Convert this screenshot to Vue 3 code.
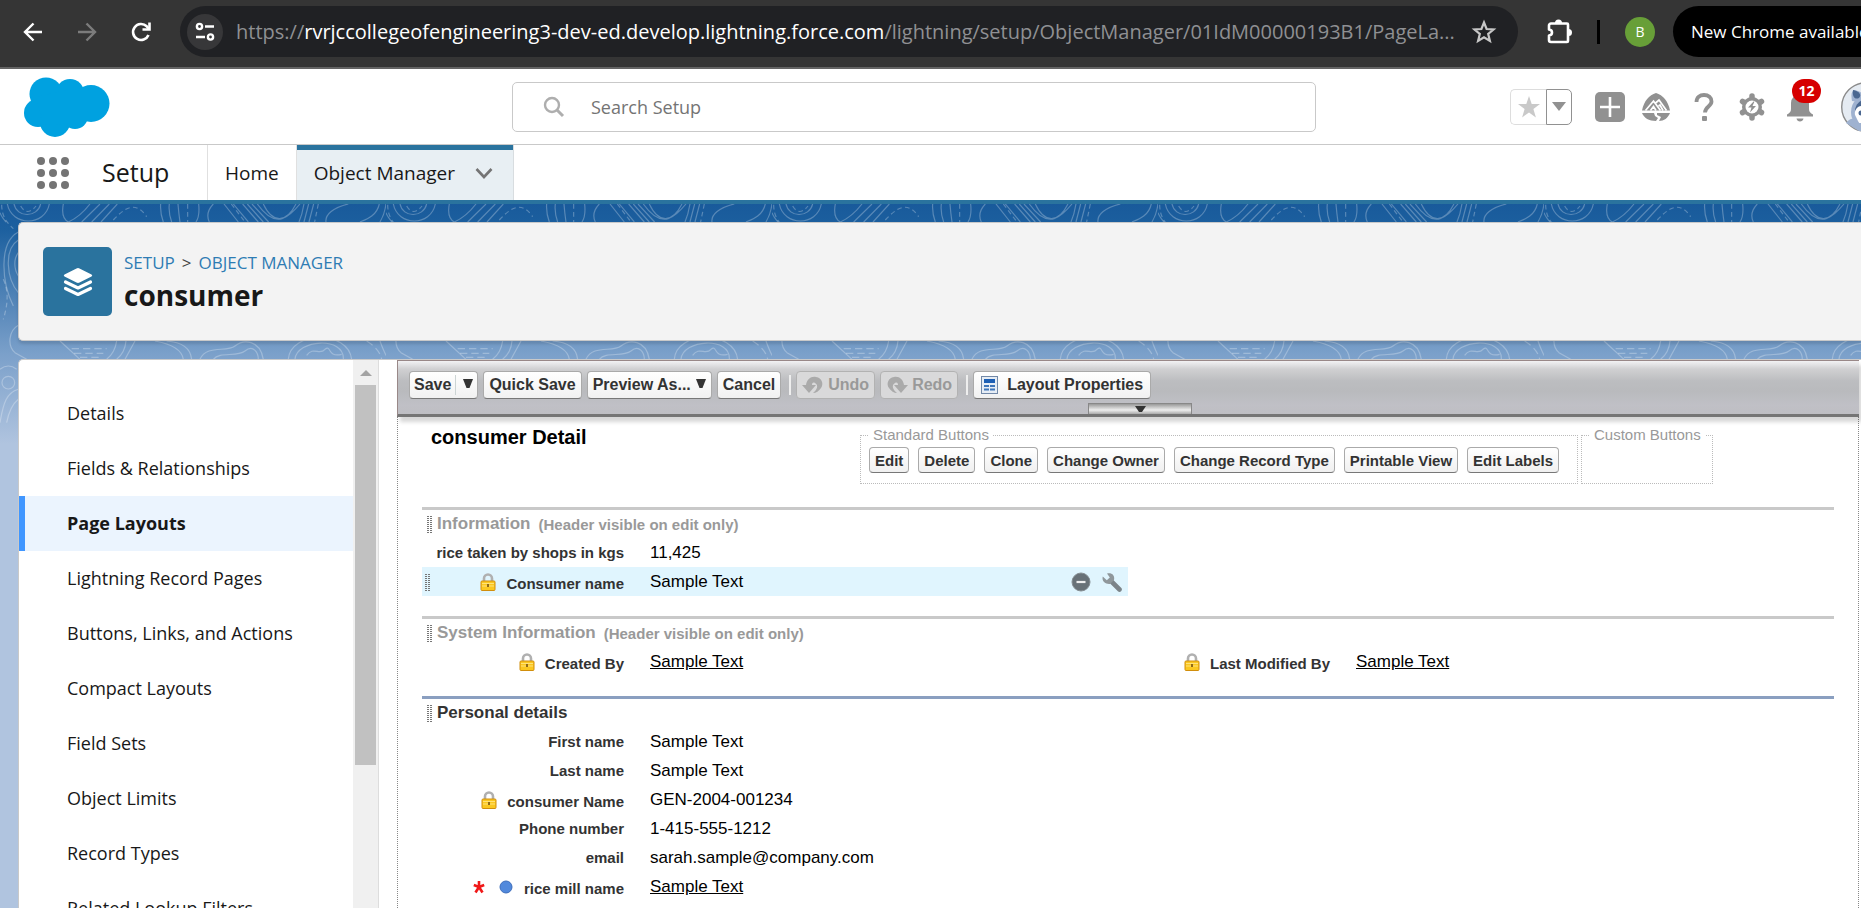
<script setup>
const navItems = [
  'Details',
  'Fields & Relationships',
  'Page Layouts',
  'Lightning Record Pages',
  'Buttons, Links, and Actions',
  'Compact Layouts',
  'Field Sets',
  'Object Limits',
  'Record Types',
  'Related Lookup Filters'
]
const activeItem = 'Page Layouts'

const standardButtons = [
  'Edit', 'Delete', 'Clone', 'Change Owner', 'Change Record Type', 'Printable View', 'Edit Labels'
]

const sections = [
  {
    title: 'Information',
    note: '(Header visible on edit only)',
    fields: [
      { label: 'rice taken by shops in kgs', value: '11,425' },
      { label: 'Consumer name', value: 'Sample Text', locked: true, selected: true }
    ]
  },
  {
    title: 'System Information',
    note: '(Header visible on edit only)',
    twoColumn: true,
    fields: [
      { label: 'Created By', value: 'Sample Text', locked: true, link: true },
      { label: 'Last Modified By', value: 'Sample Text', locked: true, link: true }
    ]
  },
  {
    title: 'Personal details',
    primary: true,
    fields: [
      { label: 'First name', value: 'Sample Text' },
      { label: 'Last name', value: 'Sample Text' },
      { label: 'consumer Name', value: 'GEN-2004-001234', locked: true },
      { label: 'Phone number', value: '1-415-555-1212' },
      { label: 'email', value: 'sarah.sample@company.com' },
      { label: 'rice mill name', value: 'Sample Text', required: true, link: true }
    ]
  }
]
</script>

<template>
  <div class="window">
    <div class="browser-bar">
      <button class="plain nav-btn" aria-label="Back">
        <svg width="24" height="24" viewBox="0 0 24 24" fill="none" stroke="#fff" stroke-width="2.4"><path d="M21 12H4.500M12.500 3.500 4 12l8.500 8.500" /></svg>
      </button>
      <button class="plain nav-btn" aria-label="Forward">
        <svg width="24" height="24" viewBox="0 0 24 24" fill="none" stroke="#7c7c7c" stroke-width="2.400"><path d="M3 12h16.500M11.500 3.500 20 12l-8.500 8.500" /></svg>
      </button>
      <button class="plain nav-btn" aria-label="Reload">
        <svg width="24" height="24" viewBox="0 0 24 24" fill="none" stroke="#fff" stroke-width="2.600"><path d="M19.500 15a8 8 0 1 1-1.800-8.700L20 9" /><path d="M20.500 2.500v7h-7" /></svg>
      </button>
      <div class="address">
        <button class="plain site-info" aria-label="Site information">
          <svg width="22" height="22" viewBox="0 0 22 22" fill="none" stroke="#fff" stroke-width="2.400"><circle cx="5.500" cy="5.500" r="2.600" /><path d="M11 5.500h9M2 16h9" /><circle cx="16.500" cy="16" r="2.600" /></svg>
        </button>
        <div class="url">https://<b>rvrjccollegeofengineering3-dev-ed.develop.lightning.force.com</b>/lightning/setup/ObjectManager/01IdM00000193B1/PageLa...</div>
        <button class="plain bookmark" aria-label="Bookmark">
          <svg width="26" height="26" viewBox="0 0 26 26" fill="none" stroke="#c7c7c7" stroke-width="2.200"><path d="M13 3.500 15.600 10l7 .500-5.400 4.500 1.700 6.900L13 18.200l-5.900 3.700 1.700-6.900L3.400 10.500l7-.500Z" /></svg>
        </button>
      </div>
      <button class="plain extensions" aria-label="Extensions">
        <svg width="28" height="28" viewBox="0 1 28 28"><path d="M4 8.500a2 2 0 0 1 2-2h16a1 1 0 0 1 1 1V24a1 1 0 0 1-1 1H6a2 2 0 0 1-2-2v-4.500c4-.500 4-5.500 0-6Z" fill="none" stroke="#fff" stroke-width="2.600" stroke-linejoin="round" /><path d="M10 6a3.500 3.500 0 0 1 7 0ZM23.500 12a3.500 3.500 0 0 1 0 7Z" fill="#fff" /></svg>
      </button>
      <span class="bar-divider"></span>
      <button class="plain profile" aria-label="Profile">B</button>
      <button class="plain update">New Chrome available</button>
    </div>

    <header class="global-header">
      <svg class="logo" width="86" height="60" viewBox="0 0 86 60" fill="#00a1e0"><circle cx="22" cy="17" r="16.500" /><circle cx="46" cy="16" r="14" /><circle cx="67" cy="26.500" r="18.500" /><circle cx="14" cy="36" r="14" /><circle cx="31" cy="45" r="15" /><circle cx="51" cy="39" r="13" /><path d="M12 20 46 12l24 12-14 22-36 2Z" /></svg>
      <label class="search">
        <svg width="22" height="22" viewBox="0 0 22 22" fill="none" stroke="#aeaeae" stroke-width="2.400"><circle cx="9" cy="9" r="7" /><path d="m14 14 6 6" stroke-width="3" /></svg>
        <input type="text" placeholder="Search Setup" aria-label="Search Setup" />
      </label>
      <div class="actions">
        <div class="favorites">
          <button class="plain fav-star" aria-label="Add favorite"><svg width="24" height="24" viewBox="0 0 24 24" fill="#c9c9c9"><path d="m12 1 2.700 8H23l-6.600 5 2.500 8.500L12 17.400l-6.900 5.100L7.600 14 1 9h8.300Z" /></svg></button>
          <button class="plain fav-menu" aria-label="Favorites list"><svg width="14" height="9" viewBox="0 0 14 9" fill="#919191"><path d="M0 0h14L7 9Z" /></svg></button>
        </div>
        <div class="icon-row">
          <button class="plain create" aria-label="Create">
            <svg width="30" height="30" viewBox="0 0 30 30"><rect width="30" height="30" rx="5" fill="#919191" /><path d="M15 5v20M5 15h20" stroke="#fff" stroke-width="2.600" /></svg>
          </button>
          <button class="plain" aria-label="Trailhead">
            <svg width="30" height="30" viewBox="0 0 30 30"><path d="M1 18.500C3 9 8 3 15 1c7 2 12 8 14 17.500Z" fill="#919191" /><path d="m4.500 18.500 8-9.500 7 9.500M14 11.500l4-3.500 7.500 10.500M9.500 18.500l3-4 2.500 4M17.500 14l1.500-1 3 5.500" fill="none" stroke="#fff" stroke-width="1.700" /><path d="M1 21h12l1 3 3 2-2 3C8 29 3 26 1 21Zm15 0h13c-2 5-6 8-11 8l2-4-4-2Z" fill="#919191" /></svg>
          </button>
          <button class="plain" aria-label="Help">
            <svg width="22" height="30" viewBox="0 0 22 30"><path d="M3.500 10C3.500 5 7 3 11 3c4.500 0 7.500 2.500 7.500 6.500 0 5-6.500 5-6.500 11" fill="none" stroke="#919191" stroke-width="3.800" /><rect x="9" y="24" width="5" height="5" rx="1" fill="#919191" /></svg>
          </button>
          <button class="plain" aria-label="Setup menu">
            <svg width="28" height="30" viewBox="0 0 28 30"><g fill="#919191"><circle cx="14" cy="15" r="10" /><g stroke="#919191" stroke-width="5.500" stroke-linecap="round"><path d="M14 4v22M4.500 9.500l19 11M4.500 20.500l19-11" /></g></g><circle cx="14" cy="15" r="6.500" fill="#fff" /><path d="M15.500 9.500 10 15.500h3.500L12 20.500l6-6.500h-3.500l2-4.500Z" fill="#919191" /></svg>
          </button>
          <button class="plain bell" aria-label="12 notifications">
            <svg width="28" height="30" viewBox="0 0 28 30" fill="#919191"><path d="M14 2a9 9 0 0 1 9 9v6c0 3 1.500 4 4 5.500v2H1v-2C3.500 21 5 20 5 17v-6a9 9 0 0 1 9-9ZM10.500 26.500h7c-.500 4-6.500 4-7 0Z" /></svg>
            <span class="badge">12</span>
          </button>
        </div>
        <button class="plain user" aria-label="View profile">
          <svg width="50" height="50" viewBox="0 0 50 50"><circle cx="25" cy="25" r="24.300" fill="#e5ebf2" stroke="#8b8b8b" stroke-width="1.400" /><circle cx="28" cy="30" r="18" fill="#9fb2d0" /><path d="M11 19C9 9 12 6 21 11l-3 9Z" fill="#9fb2d0" /><path d="M12 8c6 1 9 5 6 8-4 2-7-1-6-8Z" fill="#4a6790" /><ellipse cx="27" cy="29" rx="13" ry="12" fill="#4a6790" /><path d="M14 33c-1-5 3-9 6-9l3 3 5-4 12 9-10 9H18Z" fill="#fff" /><circle cx="20" cy="31" r="2.500" fill="#4a6790" /><path d="M5 41c5-6 8-5 12-1l9 9H18Z" fill="#9fb2d0" /></svg>
        </button>
      </div>
    </header>

    <nav class="app-nav">
      <button class="plain launcher" aria-label="App Launcher">
        <svg width="32" height="32" viewBox="0 0 32 32" fill="#747474"><template v-for="y in 3" :key="y"><circle v-for="x in 3" :key="x" :cx="x * 12 - 8" :cy="y * 12 - 8" r="4" /></template></svg>
      </button>
      <span class="app-name">Setup</span>
      <a class="tab" href="#home">Home</a>
      <a class="tab current" href="#objects">Object Manager
        <svg width="18" height="12" viewBox="0 0 18 12" fill="none" stroke="#747474" stroke-width="2.600"><path d="m1.500 2 7.500 8 7.500-8" /></svg>
      </a>
    </nav>

    <main class="stage">
      <svg class="topo" width="100%" height="300" aria-hidden="true">
        <defs>
          <pattern id="contours" width="386" height="300" patternUnits="userSpaceOnUse">
            <g transform="translate(0 -8) scale(.3333)" fill="none" stroke="#fff" stroke-opacity=".27" stroke-width="3.500">
              <path d="M22 24C35 92 135 92 148 24M42 24C50 66 112 66 122 24M190 24C185 50 190 70 205 78M270 24C250 50 228 68 205 78M300 24 245 78M328 24 275 78M352 24 303 78M482 24Q480 50 490 78M508 24Q505 50 515 78M534 24Q536 50 540 78M596 24Q600 60 588 78M640 24Q615 50 628 78M672 24 715 78M700 24 745 78M728 24 775 78M742 24 790 78M756 24 806 78M772 24C830 106 870 60 900 24M790 24C818 84 860 80 888 24M912 24Q907 55 897 78M926 24 912 78M941 24 927 78M1045 24C1000 35 975 55 978 78M1138 24C1130 60 1100 70 1080 78M1158 24Q1154 55 1140 78M0 50Q4 62 18 78" />
              <path d="M62 30C75 52 90 52 108 30M340 72C370 40 405 10 440 62M563 24V78M694 24 735 78M955 24 944 78M5 26C5 60 20 80 40 98M10 250C28 290 22 330 10 370" stroke-dasharray="14 10" />
              <path d="M55 108C-5 140 5 260 40 330M55 132C10 160 20 250 55 290M55 170C40 190 42 220 55 240M55 388C25 405 22 450 45 470L80 490M0 520Q25 500 50 520M55 580C20 590 10 620 0 680M55 610Q30 630 20 680M180 435 240 490M350 435Q345 470 320 490M378 435Q375 470 350 490M405 435 375 490M500 435Q570 440 575 490M465 435Q545 450 550 490M600 490C620 445 680 470 705 450S780 430 790 490M640 490C660 465 710 485 735 465S775 470 775 490M885 490C890 430 1035 420 1030 490M865 490C870 405 1045 400 1055 490M920 478C940 450 960 480 975 460C995 445 980 485 1025 475M1140 435Q1160 490 1170 490" />
              <circle cx="25" cy="560" r="19" />
              <path d="M215 458H320M222 472H310M240 484H300M1100 435Q1140 460 1145 490" stroke-dasharray="22 12" />
            </g>
          </pattern>
        </defs>
        <rect width="100%" height="300" fill="url(#contours)" />
      </svg>

      <section class="page-header">
        <span class="object-icon">
          <svg width="30" height="30" viewBox="0 0 30 30" fill="#fff"><path d="M13.500 1.500a3 3 0 0 1 3 0L28.500 7.500q1.500 1 0 2L16.500 15.600a3 3 0 0 1-3 0L1.500 9.500q-1.500-1 0-2Z" /><path d="M2.500 15 15 21l12.500-6M2.500 21.500 15 27.500l12.500-6" fill="none" stroke="#fff" stroke-width="3.200" stroke-linecap="round" stroke-linejoin="round" /></svg>
        </span>
        <div class="titles">
          <div class="crumbs"><a href="#setup">SETUP</a><span>&gt;</span><a href="#objects">OBJECT MANAGER</a></div>
          <h1>consumer</h1>
        </div>
      </section>

      <div class="panel">
        <aside class="sidebar">
          <nav class="side-list">
            <a v-for="item in navItems" :key="item" href="#" :class="{ active: item === activeItem }">{{ item }}</a>
          </nav>
          <div class="scroll-track">
            <svg width="12" height="6" viewBox="0 0 12 6" fill="#a3a3a3"><path d="M6 0l6 6H0Z" /></svg>
            <div class="scroll-thumb"></div>
          </div>
        </aside>

        <section class="editor">
          <div class="toolbar">
            <div class="tools">
              <button class="tool save">Save<i></i><svg class="caret" width="10" height="9" viewBox="0 0 10 9"><path d="M0 0h10L6.500 9h-3Z" fill="#333" /></svg></button>
              <button class="tool">Quick Save</button>
              <button class="tool preview">Preview As...<svg class="caret" width="10" height="9" viewBox="0 0 10 9"><path d="M0 0h10L6.500 9h-3Z" fill="#333" /></svg></button>
              <button class="tool">Cancel</button>
              <span class="tool-sep"></span>
              <button class="tool" disabled><svg width="22" height="18" viewBox="0 0 22 18" fill="#aaa"><path d="M0 9h4C5 3 9 0 14 1c6 1 8 7 5 11-2 3-5 5-8 5 4-3 6-8 2-10-2-1-3 0-3 2h4l-7 8Z" /></svg>Undo</button>
              <button class="tool" disabled><svg width="22" height="18" viewBox="0 0 22 18" fill="#aaa"><path d="M22 9h-4C17 3 13 0 8 1 2 2 0 8 3 12c2 3 5 5 8 5-4-3-6-8-2-10 2-1 3 0 3 2H8l7 8Z" /></svg>Redo</button>
              <span class="tool-sep"></span>
              <button class="tool props"><svg width="17" height="18" viewBox="0 0 17 18"><rect x=".5" y=".5" width="16" height="17" fill="#e6edf5" stroke="#7289a8" /><path d="M3 3h11v4H3Z" fill="#1d5fb4" /><path d="M3 10h5M9 10h5M3 13.500h5M9 13.500h5" stroke="#3f76ba" stroke-width="2" /></svg>Layout Properties</button>
            </div>
            <button class="plain handle" aria-label="Expand palette"><svg width="11" height="6" viewBox="0 0 11 6"><path d="M0 0h11L7 6H4Z" fill="#333" /></svg></button>
          </div>

          <div class="canvas">
            <div class="detail-head">
              <h2>consumer Detail</h2>
              <fieldset class="standard">
                <legend>Standard Buttons</legend>
                <button v-for="b in standardButtons" :key="b" class="small-btn">{{ b }}</button>
              </fieldset>
              <fieldset class="custom"><legend>Custom Buttons</legend></fieldset>
            </div>

            <section v-for="s in sections" :key="s.title" class="section" :class="{ primary: s.primary }">
              <h3><span class="grip"></span>{{ s.title }}<span v-if="s.note" class="note">{{ s.note }}</span></h3>
              <dl class="fields" :class="{ two: s.twoColumn }">
                <div v-for="f in s.fields" :key="f.label" class="field" :class="{ selected: f.selected, marked: f.locked || f.required }">
                  <span v-if="f.selected" class="grip row-grip"></span>
                  <dt>
                    <svg v-if="f.locked" class="lock" width="16" height="18" viewBox="0 0 16 18"><path d="M4 9V5.500a4 4 0 0 1 8 0V9" fill="none" stroke="#b0b0b0" stroke-width="2.600" /><rect x="1" y="8" width="14" height="9.500" rx="1" fill="#fbc820" stroke="#d18e0c" /><path d="M2 10.500h12M2 13h12" stroke="#ffe27a" /><path d="M7 11h2v3H7Z" fill="#8f6a18" /></svg>
                    <template v-if="f.required">
                      <svg width="12" height="14" viewBox="0 0 12 14" stroke="#f01818" stroke-width="2.600"><path d="M6 1v6M6 7 .800 5M6 7l5.200-2M6 7l-3.500 5.500M6 7l3.500 5.500" /></svg>
                      <svg class="dot" width="14" height="14" viewBox="0 0 14 14"><circle cx="7" cy="7" r="6" fill="#5189dc" stroke="#3d6dbb" /></svg>
                    </template>
                    <span>{{ f.label }}</span>
                  </dt>
                  <dd><a v-if="f.link" href="#">{{ f.value }}</a><template v-else>{{ f.value }}</template></dd>
                  <div v-if="f.selected" class="row-tools">
                    <button class="plain" aria-label="Remove"><svg width="20" height="20" viewBox="0 0 20 20"><circle cx="10" cy="10" r="9" fill="#687177" stroke="#858d92" /><path d="M5.500 10h9" stroke="#eee" stroke-width="2.200" /></svg></button>
                    <button class="plain" aria-label="Properties"><svg width="20" height="20" viewBox="0 0 20 20"><path d="m9 9 8.500 8.500" stroke="#7c8489" stroke-width="4.600" stroke-linecap="round" /><path d="M5 1.500c5-1.500 8 2 7 6.500l-4 4C3 12.500-.500 9 .800 4.500l4 3.700 3-2.700Z" fill="#8f979b" /></svg></button>
                  </div>
                </div>
              </dl>
            </section>
          </div>
        </section>
      </div>
    </main>
  </div>
</template>

<style>
body { margin: 0; background: #b0c4df; }
</style>

<style scoped>
* { box-sizing: border-box; }
.window { height: 100vh; display: flex; flex-direction: column; overflow: hidden; font-family: "Open Sans", "Noto Sans", sans-serif; color: #181818; }
.plain { border: 0; padding: 0; background: none; font: inherit; color: inherit; display: flex; align-items: center; justify-content: center; }
a { color: inherit; text-decoration: none; }
svg { flex: none; }

.browser-bar { flex: none; height: 69px; display: flex; align-items: center; padding: 0 0 4px 18px; background: #353535; border-bottom: 2px solid #646464; overflow: hidden; }
.nav-btn { flex: none; width: 30px; margin-right: 24px; }
.address { flex: 1; min-width: 0; height: 51px; border-radius: 26px; background: #202124; display: flex; align-items: center; padding: 0 21px 0 7px; }
.site-info { flex: none; width: 36px; height: 36px; border-radius: 50%; background: #373739; margin-right: 13px; }
.url { flex: 1; min-width: 0; overflow: hidden; white-space: nowrap; font-size: 20px; color: #8f9093; }
.url b { font-weight: 400; color: #fff; }
.bookmark { margin-left: 8px; }
.extensions { margin-left: 27px; }
.bar-divider { flex: none; width: 3px; height: 24px; margin-left: 24px; background: #000; }
.profile { flex: none; width: 30px; height: 30px; margin-left: 25px; border-radius: 50%; background: #689f38; color: #fff; font-size: 14px; }
.update { flex: none; width: 188px; height: 51px; margin-left: 18px; padding-left: 18px; justify-content: flex-start; border-radius: 26px 0 0 26px; background: #000; color: #fff; font-size: 17px; white-space: nowrap; overflow: hidden; }

.global-header { flex: none; height: 76px; display: grid; grid-template-columns: 488px 1fr 545px; align-items: center; padding-left: 24px; background: #fff; border-bottom: 1px solid #c9c9c9; }
.search { height: 50px; display: flex; align-items: center; gap: 26px; padding: 0 30px; border: 1px solid #c9c9c9; border-radius: 5px; }
.search input { flex: 1; min-width: 0; border: 0; outline: 0; padding: 0; font: inherit; font-size: 18px; }
.search input::placeholder { color: #747474; opacity: 1; }
.actions { display: flex; align-items: center; justify-content: flex-end; gap: 24px; overflow: hidden; height: 75px; }
.favorites { display: flex; }
.fav-star { width: 36px; height: 36px; border: 1px solid #ddd; border-right: 0; border-radius: 5px 0 0 5px; }
.fav-menu { width: 26px; height: 36px; border: 1px solid #919191; border-radius: 0 5px 5px 0; }
.icon-row { display: flex; gap: 18px; }
.icon-row .plain { width: 30px; }
.bell { position: relative; }
.badge { position: absolute; left: 7px; top: -13px; width: 29px; height: 24px; border-radius: 12px; background: #d60000; color: #fff; font-size: 14px; line-height: 24px; font-weight: 700; }
.icon-row .create { width: 27px; }
.user { width: 20px; margin-left: 2px; justify-content: flex-start; }

.app-nav { flex: none; height: 59px; display: flex; background: #fff; border-bottom: 4px solid #2a739e; }
.launcher { width: 32px; margin-left: 37px; }
.app-name { width: 138px; padding-left: 33px; font-size: 25px; line-height: 55px; }
.tab { display: flex; align-items: center; gap: 20px; padding: 0 17px; border-left: 1px solid #e0e0e0; font-size: 19px; }
.tab.current { background: #e8eff3; border-right: 1px solid #d8dde0; box-shadow: inset 0 5px #2a739e; padding-right: 20px; }

.stage { position: relative; flex: 1; min-height: 0; display: flex; flex-direction: column; gap: 18px; padding: 18px 0 0 18px; background: linear-gradient(#195a9b 0, #1c609f 25px, #7ba0ca 150px, #b0c4df 240px); }
.topo { position: absolute; left: 0; top: 0; }
.page-header { position: relative; flex: none; height: 119px; display: flex; align-items: center; gap: 12px; padding-left: 24px; background: #f3f3f3; border: 1px solid #c9c9c9; border-right: 0; border-radius: 5px 0 0 5px; box-shadow: 0 3px 3px rgba(0, 0, 0, .12); }
.object-icon { width: 69px; height: 69px; border-radius: 5px; background: #2a739e; display: flex; align-items: center; justify-content: center; }
.titles { padding-top: 2px; }
.crumbs { display: flex; gap: 7px; font-size: 17px; line-height: 24px; color: #444; }
.crumbs a { color: #2e7cb3; }
h1 { margin: 0; font-size: 28px; line-height: 40px; font-weight: 700; }

.panel { position: relative; flex: 1; min-height: 0; display: flex; background: #fff; border: 1px solid #c9c9c9; border-width: 1px 0 0 1px; border-radius: 5px 0 0 0; overflow: hidden; }
.sidebar { flex: none; width: 360px; display: flex; border-right: 1px solid #ddd; }
.side-list { flex: 1; padding-top: 26px; }
.side-list a { display: block; height: 55px; padding-left: 48px; line-height: 55px; font-size: 18px; white-space: nowrap; }
.side-list a.active { background: #ebf4fe; box-shadow: inset 6px 0 #4096ff; font-weight: 700; }
.scroll-track { width: 25px; display: flex; flex-direction: column; align-items: center; padding-top: 10px; background: #f0f0f0; }
.scroll-thumb { width: 21px; height: 380px; margin-top: 9px; background: #c1c1c1; }

.editor { flex: 1; min-width: 0; margin: 0 2px 0 18px; display: flex; flex-direction: column; font-family: "Liberation Sans", Arial, sans-serif; color: #000; }
.toolbar { flex: none; height: 57px; position: relative; z-index: 1; padding: 10px 0 0 11px; background: linear-gradient(#f2f2f4 0, #d0d0d2 8px, #bcbdc0 20px, #b9babd 30px, #c0c0c6 44px, #bebec3); border: 1px solid #988; border-width: 1px 0 3px 1px; border-bottom-color: #757575; box-shadow: 3px 5px 4px rgba(0, 0, 0, .16); }
.tools { display: flex; gap: 5px; }
.tool { height: 28px; display: flex; align-items: center; padding: 0 5px; border: 1px solid #aaa; border-bottom-color: #777; border-radius: 4px; background: linear-gradient(#fff, #f1f1f1); font: bold 16px "Liberation Sans", Arial, sans-serif; color: #333; white-space: nowrap; }
.tool:disabled { color: #999; background: #d9d9da; border-color: #b2b2b2; gap: 4px; }
.tool.save { padding: 0 4px; }
.save i { width: 1px; height: 20px; margin: 0 7px 0 4px; background: #ccd4d4; }
.caret { margin-bottom: 3px; }
.preview { gap: 5px; }
.tool-sep { width: 2px; height: 20px; margin: 4px 0 4px 3px; background: #eee; }
.tool.props { gap: 9px; padding: 0 7px; }
.handle { position: absolute; left: 690px; bottom: 0; width: 104px; height: 11px; border: 1px solid #888; border-bottom: 0; background: linear-gradient(#999, #eee 60%, #aaa); }

.canvas { flex: 1; padding: 9px 24px 0 24px; border: 1px dotted #888; border-width: 0 1px; overflow: hidden; }
.detail-head { display: flex; align-items: flex-start; height: 81px; }
h2 { width: 438px; margin: 0; padding-left: 9px; font-size: 20px; line-height: 22px; }
fieldset { height: 58px; margin: 0 3px 0 0; padding: 3px 0 0 8px; min-width: 0; border: 1px dotted #bbb; display: block; white-space: nowrap; }
legend { padding: 0 4px; font-size: 15px; line-height: 18px; color: #999; }
.standard { width: 718px; }
.custom { width: 132px; margin: 0; }
.small-btn { height: 26px; margin: 0 9px 0 0; padding: 0 5px; border: 1px solid #aaa; border-bottom-color: #777; border-radius: 4px; background: linear-gradient(#fff, #f0f0f0); font: bold 15px "Liberation Sans", Arial, sans-serif; color: #333; }

.section { margin-bottom: 20px; border-top: 3px solid #c9c9c9; color: #999; }
.section.primary { border-color: #8a9fc0; color: #333; }
h3 { display: flex; align-items: center; height: 28px; margin: 0; padding-left: 5px; font-size: 17px; }
.note { margin-left: 8px; font-size: 15px; }
.grip { width: 5px; height: 17px; margin-right: 5px; background: repeating-linear-gradient(transparent 0 1px, #fff 1px 2px), linear-gradient(90deg, #777 0 2px, transparent 2px 3px, #777 3px); }
.fields { margin: 0; display: grid; grid-template-columns: 1fr 1fr; }
.field { position: relative; grid-column: 1; height: 29px; display: grid; grid-template-columns: 202px 1fr auto; gap: 26px; line-height: 29px; }
.two .field { grid-column: auto; }
.field.selected { background: #e0f5fe; }
.row-grip { position: absolute; left: 3px; top: 7px; background: repeating-linear-gradient(transparent 0 1px, #e0f5fe 1px 2px), linear-gradient(90deg, #777 0 2px, transparent 2px 3px, #777 3px); }
dt { display: flex; justify-content: flex-end; align-items: center; font-size: 15px; line-height: 20px; font-weight: 700; color: #333; white-space: nowrap; }
.marked dt span { padding-top: 5px; }
.lock { margin-right: 10px; }
.dot { margin: 0 11px 0 14px; }
dd { margin: 0; font-size: 17px; color: #000; }
dd a { text-decoration: underline; }
.row-tools { display: flex; align-items: center; gap: 11px; padding-right: 6px; }
</style>
